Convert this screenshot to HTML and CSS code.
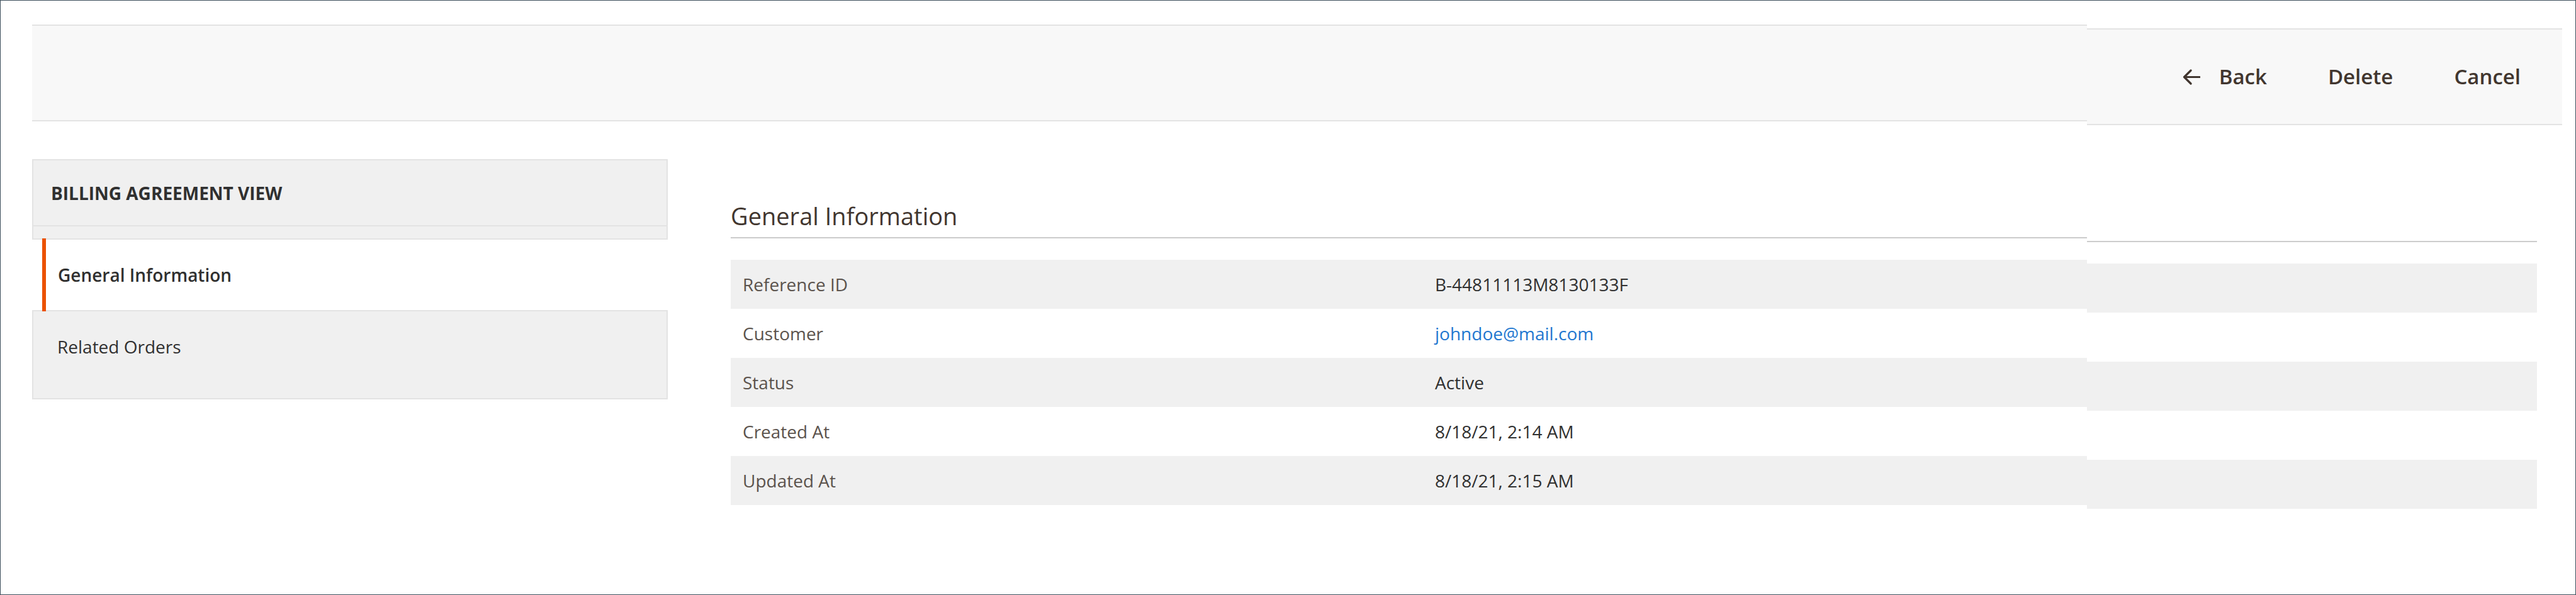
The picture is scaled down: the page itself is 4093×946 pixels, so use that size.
FILE: index.html
```html
<!DOCTYPE html>
<html lang="en">
<head>
<meta charset="utf-8">
<title>Billing Agreement View</title>
<link rel="stylesheet" href="styles.css">
</head>
<body>
<div class="frame">
  <div class="pane pane-left">
    <div class="page-actions"></div>
    <div class="columns">
      <aside class="nav">
        <div class="nav-title">Billing Agreement View</div>
        <ul class="nav-items">
          <li class="nav-item active"><a class="nav-link">General Information</a></li>
          <li class="nav-item"><a class="nav-link">Related Orders</a></li>
        </ul>
      </aside>
      <main class="main">
        <h2 class="section-title">General Information</h2>
        <table class="info-table">
          <colgroup><col class="col-label"><col></colgroup>
          <tbody>
            <tr><th>Reference ID</th><td>B-44811113M8130133F</td></tr>
            <tr><th>Customer</th><td><a class="link">johndoe@mail.com</a></td></tr>
            <tr><th>Status</th><td>Active</td></tr>
            <tr><th>Created At</th><td>8/18/21, 2:14 AM</td></tr>
            <tr><th>Updated At</th><td>8/18/21, 2:15 AM</td></tr>
          </tbody>
        </table>
      </main>
    </div>
  </div>
  <div class="pane pane-right">
    <div class="page-actions actions-right">
      <button class="action action-back">
        <svg class="back-icon" width="28" height="25" viewBox="0 0 28 25" fill="none" stroke="currentColor" stroke-width="3.2" stroke-linecap="round" stroke-linejoin="round"><path d="M13 2 L2.5 12.5 L13 23"/><path d="M3 12.5 H27"/></svg>
        <span>Back</span>
      </button>
      <button class="action">Delete</button>
      <button class="action">Cancel</button>
    </div>
    <div class="main-cont">
      <div class="section-title"></div>
      <table class="info-table">
        <tbody>
          <tr><td></td></tr>
          <tr><td></td></tr>
          <tr><td></td></tr>
          <tr><td></td></tr>
          <tr><td></td></tr>
        </tbody>
      </table>
    </div>
  </div>
</div>
</body>
</html>
```

FILE: styles.css
```css
html, body {
  margin: 0;
  padding: 0;
  background: #ffffff;
}

body {
  font-family: "Open Sans", "Noto Sans", sans-serif;
  color: #303030;
}

.frame {
  display: flex;
  width: 4093px;
  height: 946px;
  box-sizing: border-box;
  border: 1px solid #3c4e5a;
  overflow: hidden;
}

.pane-left {
  width: 3315px;
  flex: none;
  overflow: hidden;
}

.pane-right {
  flex: 1;
  min-width: 0;
  padding-top: 6px;
}

.page-actions {
  margin-top: 38px;
  height: 150px;
  background: #f8f8f8;
  border-top: 2px solid #e3e3e3;
  border-bottom: 2px solid #e3e3e3;
}

.pane-left .page-actions {
  margin-left: 50px;
}

.actions-right {
  margin-right: 21px;
  display: flex;
  justify-content: flex-end;
  align-items: center;
  gap: 97px;
  padding-right: 66px;
}

.action {
  display: flex;
  align-items: center;
  gap: 30px;
  border: 0;
  background: none;
  padding: 0;
  margin: 0;
  font-family: "Open Sans", "Noto Sans", sans-serif;
  font-size: 33px;
  font-weight: 600;
  color: #41362f;
  line-height: 44px;
}

.back-icon {
  display: block;
  flex: none;
}

.columns {
  display: flex;
  margin-top: 60px;
  padding-left: 50px;
}

.nav {
  width: 1010px;
  flex: none;
}

.nav-title {
  height: 103px;
  display: flex;
  align-items: center;
  padding-left: 28px;
  border: 2px solid #e3e3e3;
  background: #f0f0f0;
  font-size: 28px;
  font-weight: 700;
  text-transform: uppercase;
  color: #303030;
}

.nav-items {
  list-style: none;
  margin: 0;
  padding: 19px 0 26px;
  background: #f0f0f0;
  border: 2px solid #e3e3e3;
  border-top: 0;
}

.nav-link {
  display: flex;
  align-items: center;
  height: 112px;
  padding-left: 38px;
  font-size: 28px;
  color: #303030;
}

.nav-item.active {
  margin: 0 -2px;
  padding-left: 16px;
  background: #ffffff;
  border-top: 2px solid #e3e3e3;
  border-bottom: 2px solid #e3e3e3;
}

.nav-item.active .nav-link {
  height: 116px;
  margin: -2px 0;
  padding-left: 19px;
  border-left: 6px solid #eb5202;
  font-weight: 600;
}

.main {
  flex: 1;
  min-width: 0;
  margin-left: 100px;
  padding-top: 64px;
}

.main-cont {
  margin-top: 60px;
  padding-top: 64px;
  margin-right: 61px;
}

.section-title {
  margin: 0;
  height: 52px;
  padding-bottom: 8px;
  border-bottom: 2px solid #cccccc;
  font-size: 38px;
  font-weight: 400;
  line-height: 52px;
  color: #41362f;
  white-space: nowrap;
}

.info-table {
  width: 100%;
  margin-top: 34px;
  border-collapse: collapse;
  table-layout: fixed;
  font-size: 28px;
}

.col-label {
  width: 1098px;
}

.info-table tr {
  height: 78px;
}

.info-table tr:nth-child(odd) {
  background: #f0f0f0;
}

.info-table th,
.info-table td {
  padding: 0 21px;
  text-align: left;
  vertical-align: middle;
  font-weight: 400;
  white-space: nowrap;
}

.info-table th {
  padding-left: 19px;
  color: #5b534d;
}

.info-table td {
  color: #303030;
}

.link {
  color: #1f77d0;
  text-decoration: none;
}
```
